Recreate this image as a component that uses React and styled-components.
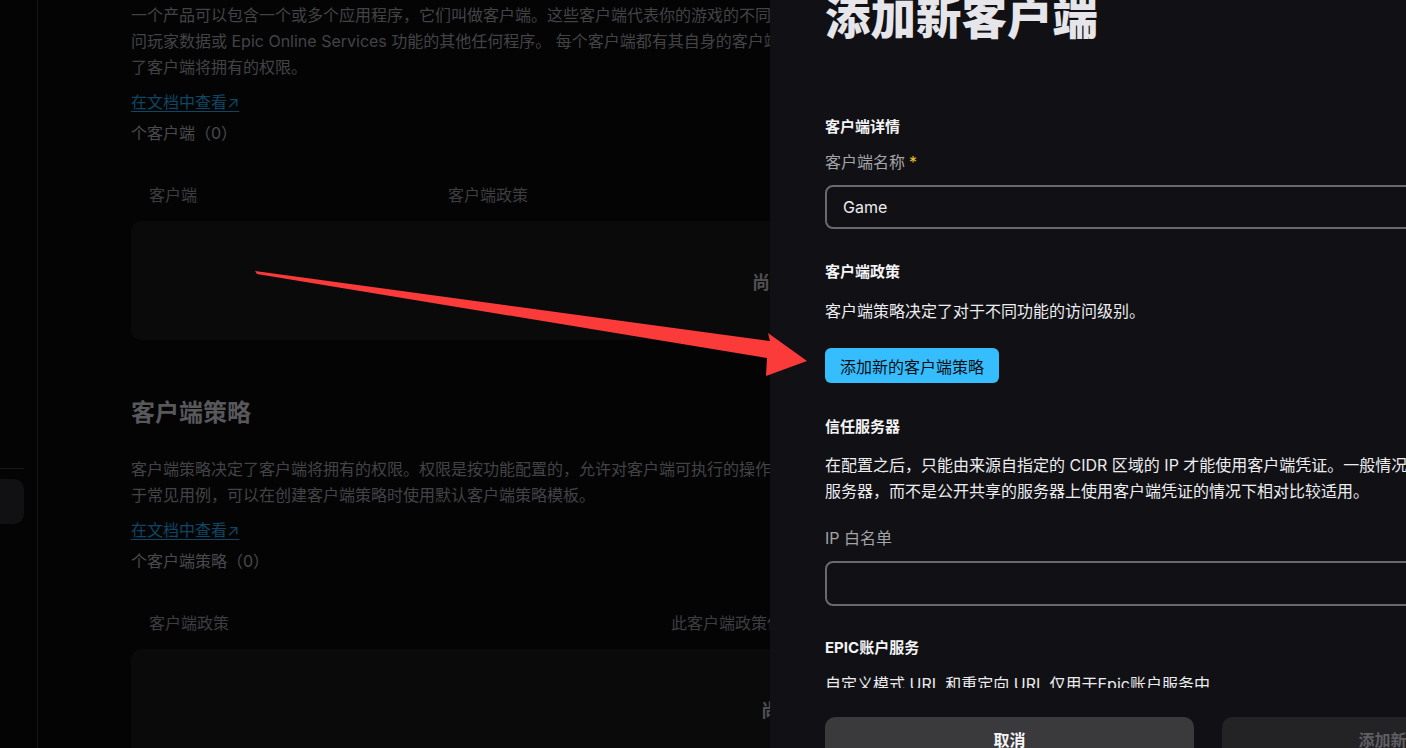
import React from 'react';
import styled, { createGlobalStyle } from 'styled-components';

const GlobalStyle = createGlobalStyle`
  html, body {
    margin: 0;
    padding: 0;
    background: #040405;
  }
  body {
    font-family: Inter, "Noto Sans CJK SC", sans-serif;
    overflow: hidden;
  }
`;

const Shell = styled.div`
  position: relative;
  width: 1406px;
  height: 748px;
  overflow: hidden;
  display: flex;
  background: #040405;
`;

const Sidebar = styled.aside`
  width: 38px;
  flex-shrink: 0;
  box-sizing: border-box;
  border-right: 1px solid #161618;
  display: flex;
  flex-direction: column;
  align-items: flex-end;
  padding: 468px 13px 0 0;
  overflow: hidden;
`;

const NavDivider = styled.div`
  flex-shrink: 0;
  width: 220px;
  height: 1px;
  background: #19191b;
`;

const NavActive = styled.div`
  flex-shrink: 0;
  width: 220px;
  height: 45px;
  margin-top: 10px;
  border-radius: 10px;
  background: #111113;
`;

const Main = styled.main`
  flex: none;
  width: 1340px;
  box-sizing: content-box;
  padding: 2px 0 0 93px;
`;

const Para = styled.p`
  margin: ${p => p.$top || 0}px 0 0;
  font-size: 16px;
  line-height: 26px;
  color: #434346;
  white-space: nowrap;
`;

const DocLink = styled.a`
  display: inline-block;
  margin-top: 10px;
  font-size: 16px;
  line-height: 24px;
  color: #0e4663;
  text-decoration: underline;
  text-underline-offset: 3px;
`;

const Count = styled.div`
  margin-top: 7px;
  font-size: 16px;
  line-height: 24px;
  color: #4a4a4d;
`;

const TableHead = styled.div`
  display: grid;
  grid-template-columns: ${p => p.$first}px 1fr;
  margin-top: 38px;
  padding: 0 18px;
  font-size: 16px;
  line-height: 24px;
  color: #3e3e41;
`;

const EmptyBox = styled.div`
  margin-top: 14px;
  height: 119px;
  border-radius: 10px;
  background: #0a0a0b;
  display: flex;
  align-items: center;
  justify-content: center;
  padding-right: 8px;
  font-size: 18px;
  font-weight: 700;
  color: #4f4f52;
`;

const PageTitle = styled.h2`
  margin: 57px 0 0;
  font-size: 24px;
  line-height: 32px;
  font-weight: 700;
  color: #58585b;
`;

const Drawer = styled.section`
  position: absolute;
  top: 0;
  left: 770px;
  width: 876px;
  height: 748px;
  background: #111115;
  display: flex;
  flex-direction: column;
  overflow: hidden;
  z-index: 2;
`;

const ScrollArea = styled.div`
  flex: none;
  height: 688px;
  box-sizing: border-box;
  padding: 0 55px;
  overflow: hidden;
`;

const DrawerTitle = styled.h1`
  margin: -9px 0 0;
  font-size: 45.5px;
  line-height: 56px;
  font-weight: 900;
  color: #e6e6ea;
`;

const Section = styled.div`
  margin-top: ${p => p.$top ?? 33}px;
`;

const Heading = styled.h3`
  margin: 0;
  font-size: 15px;
  line-height: 20px;
  font-weight: 700;
  color: #f4f4f6;
`;

const Label = styled.label`
  display: block;
  margin-top: ${p => p.$top}px;
  font-size: 16px;
  line-height: 24px;
  color: #a3a3a8;
`;

const Star = styled.span`
  margin-left: 4px;
  color: #f2c230;
`;

const TextInput = styled.input`
  display: block;
  width: 100%;
  height: ${p => p.$h}px;
  margin-top: 11px;
  box-sizing: border-box;
  padding: 0 16px;
  border: 2px solid #69696e;
  border-radius: 8px;
  background: transparent;
  font-family: inherit;
  font-size: 16px;
  color: #ececef;
  outline: none;
`;

const Desc = styled.p`
  margin: ${p => p.$top}px 0 0;
  font-size: 16px;
  line-height: ${p => p.$lh || 24}px;
  color: #ececef;
  white-space: nowrap;
`;

const PrimaryButton = styled.button`
  display: block;
  margin-top: 25px;
  height: 35px;
  padding: 0 15px;
  border: none;
  border-radius: 6px;
  background: #35bdfd;
  color: #0c0f14;
  font-family: inherit;
  font-size: 16px;
`;

const Footer = styled.div`
  flex: none;
  height: 60px;
  box-sizing: border-box;
  padding: 29px 55px 0;
  display: grid;
  grid-template-columns: 1fr 1fr;
  gap: 28px;
`;

const FooterButton = styled.button`
  height: 44px;
  border: none;
  border-radius: 10px;
  background: ${p => (p.$muted ? '#232326' : '#3a3a3d')};
  color: ${p => (p.$muted ? '#5f5f63' : '#f4f4f6')};
  font-family: inherit;
  font-size: 16px;
  font-weight: 700;
`;

const ArrowLayer = styled.svg`
  position: absolute;
  inset: 0;
  width: 1406px;
  height: 748px;
  pointer-events: none;
  z-index: 3;
`;

export default function App() {
  return (
    <Shell>
      <GlobalStyle />
      <Sidebar>
        <NavDivider />
        <NavActive />
      </Sidebar>

      <Main>
        <Para>
          一个产品可以包含一个或多个应用程序，它们叫做客户端。这些客户端代表你的游戏的不同部分，例如游戏客户端、专用服务器或者需要访问后端服务的工具
          <br />
          问玩家数据或 Epic Online Services 功能的其他任何程序。 每个客户端都有其自身的客户端凭证和客户端策略，客户端策略决定
          <br />
          了客户端将拥有的权限。
        </Para>
        <DocLink>在文档中查看↗</DocLink>
        <Count>个客户端（0）</Count>
        <TableHead $first={299}>
          <span>客户端</span>
          <span>客户端政策</span>
        </TableHead>
        <EmptyBox>尚无客户端</EmptyBox>

        <PageTitle>客户端策略</PageTitle>
        <Para $top={27}>
          客户端策略决定了客户端将拥有的权限。权限是按功能配置的，允许对客户端可执行的操作进行精细控制。对
          <br />
          于常见用例，可以在创建客户端策略时使用默认客户端策略模板。
        </Para>
        <DocLink>在文档中查看↗</DocLink>
        <Count>个客户端策略（0）</Count>
        <TableHead $first={522}>
          <span>客户端政策</span>
          <span>此客户端政策使用的客户端</span>
        </TableHead>
        <EmptyBox>尚无政策</EmptyBox>
      </Main>

      <Drawer>
        <ScrollArea>
          <DrawerTitle>添加新客户端</DrawerTitle>

          <Section $top={70}>
            <Heading>客户端详情</Heading>
            <Label $top={13}>
              客户端名称<Star>*</Star>
            </Label>
            <TextInput $h={44} defaultValue="Game" />
          </Section>

          <Section>
            <Heading>客户端政策</Heading>
            <Desc $top={17}>客户端策略决定了对于不同功能的访问级别。</Desc>
            <PrimaryButton>添加新的客户端策略</PrimaryButton>
          </Section>

          <Section $top={34}>
            <Heading>信任服务器</Heading>
            <Desc $top={15} $lh={26}>
              在配置之后，只能由来源自指定的 CIDR 区域的 IP 才能使用客户端凭证。一般情况下，在您自己的专用
              <br />
              服务器，而不是公开共享的服务器上使用客户端凭证的情况下相对比较适用。
            </Desc>
            <Label $top={22}>IP 白名单</Label>
            <TextInput $h={45} />
          </Section>

          <Section $top={32}>
            <Heading>EPIC账户服务</Heading>
            <Desc $top={14}>自定义模式 URL 和重定向 URL 仅用于Epic账户服务中</Desc>
          </Section>
        </ScrollArea>

        <Footer>
          <FooterButton>取消</FooterButton>
          <FooterButton $muted>添加新客户端</FooterButton>
        </Footer>
      </Drawer>

      <ArrowLayer viewBox="0 0 1406 748">
        <polygon
          points="255,271 770,341 768,333 807,361 766,376 767,358 257,274"
          fill="#fb3a3a"
        />
      </ArrowLayer>
    </Shell>
  );
}
